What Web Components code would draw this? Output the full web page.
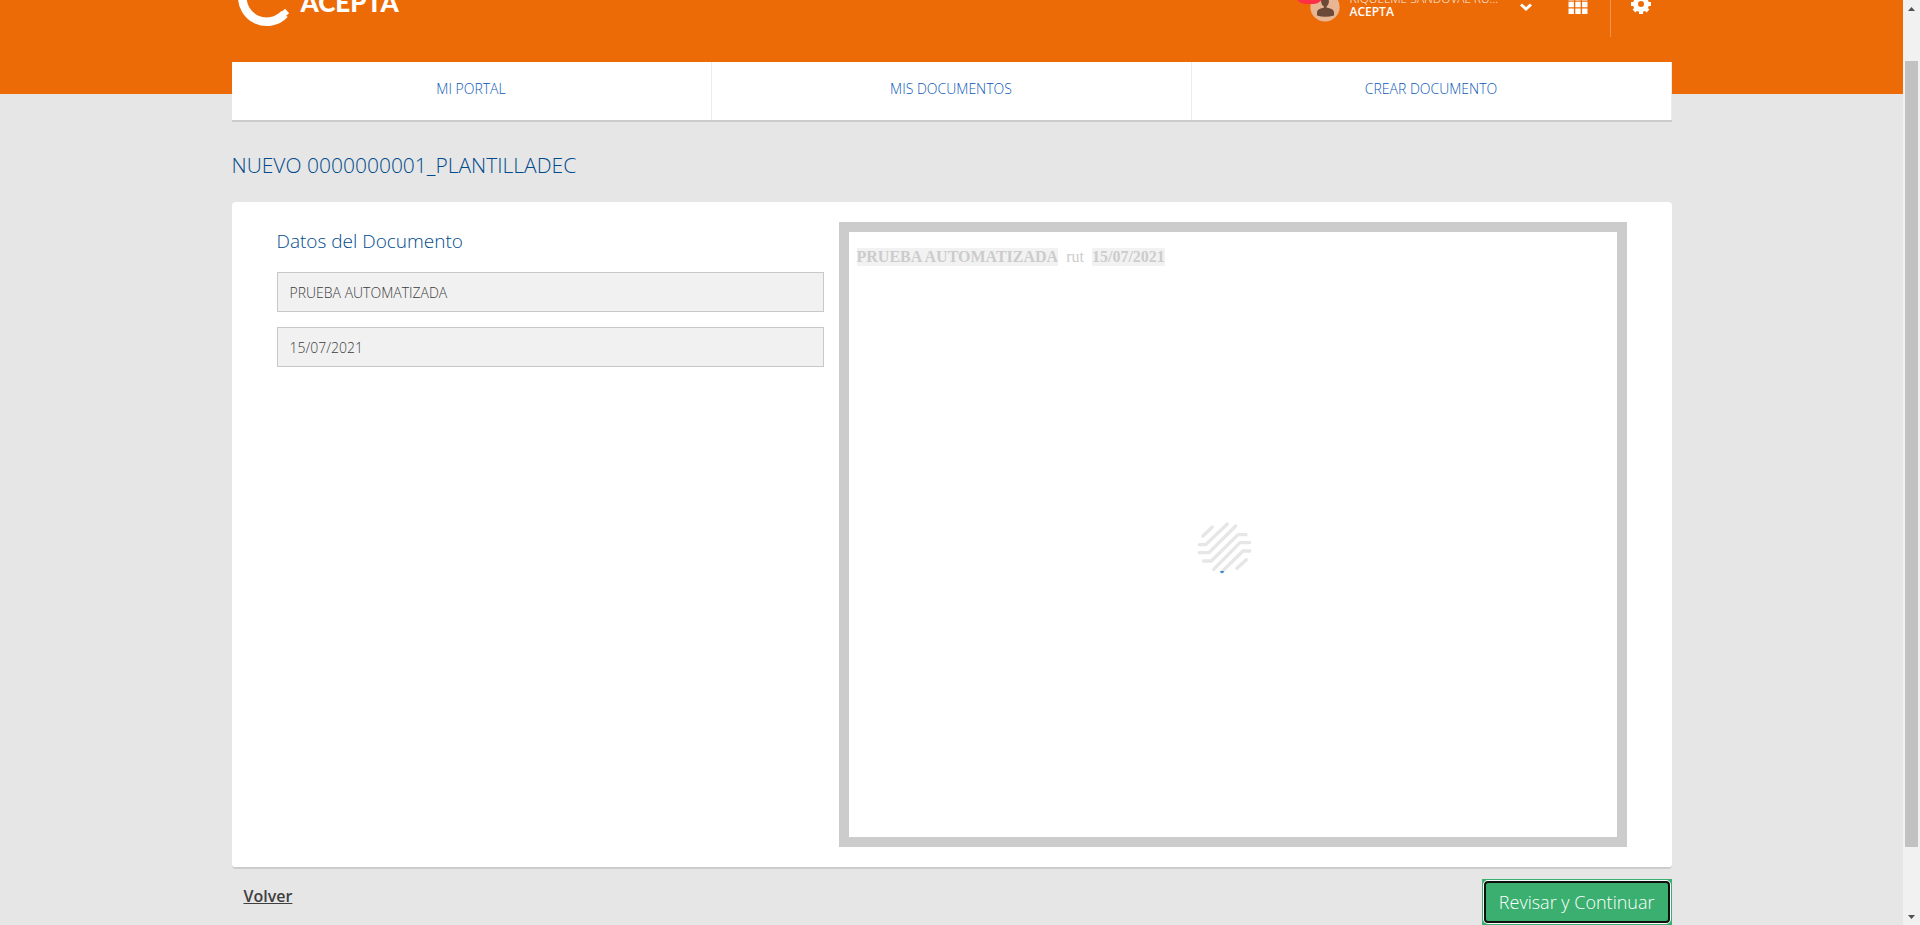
<!DOCTYPE html>
<html lang="es">
<head>
<meta charset="utf-8">
<title>Acepta - Nuevo documento</title>
<style>
  html, body { margin: 0; }
  body {
    min-height: 100vh;
    background: #e6e6e6;
    font-family: "Open Sans", sans-serif;
    font-weight: 300;
    overflow: hidden;
  }
</style>
</head>
<body>
<acepta-app></acepta-app>

<script>
function define(name, html, setup) {
  const template = document.createElement('template');
  template.innerHTML = html;
  customElements.define(name, class extends HTMLElement {
    constructor() {
      super();
      this.attachShadow({ mode: 'open' }).appendChild(template.content.cloneNode(true));
    }
    connectedCallback() {
      if (setup) setup(this, this.shadowRoot);
    }
  });
}

define('acepta-logo', `
  <style>
    :host { display: flex; align-items: center; gap: 4px; color: #fff; }
    svg { display: block; width: 61px; height: 64px; }
    span { padding-bottom: 6px; font: 900 26px/32px Lato, sans-serif; }
  </style>
  <svg viewBox="0 0 61 64" aria-hidden="true">
    <path d="M6.500 22A24.300 24.300 0 0 0 48.500 41" fill="none" stroke="#fff" stroke-width="8.600" stroke-linejoin="round"/>
    <path d="M46.500 38L50.500 42.500" stroke="#fff" stroke-width="7" stroke-linejoin="round"/>
  </svg>
  <span>ACEPTA</span>
`);

define('user-menu', `
  <style>
    :host { display: flex; align-items: center; color: #fff; font-size: 12px; line-height: 13px; }
    .avatar { position: relative; margin-right: 10px; }
    .avatar svg { display: block; width: 30px; height: 30px; margin-top: 4px; }
    .badge {
      position: absolute; left: -14px; top: -2px;
      width: 27px; height: 18px; border-radius: 9px; background: #ff2f45;
    }
    .names { width: 150px; white-space: nowrap; }
    .name { color: #fff2e8; }
    .company { font-weight: 600; }
    button { display: block; padding: 0; border: 0; background: none; margin-left: 19px; }
    button svg { display: block; width: 14px; height: 10px; margin-top: 3px; }
  </style>
  <div class="avatar">
    <svg viewBox="0 0 30 30" aria-hidden="true">
      <circle cx="15" cy="15" r="14.6" fill="#e9b693"/>
      <path d="M11 9a4.2 4.2 0 0 1 8 0c0 2.500-1.500 5-2.500 5.500v1l4.500 1.200q3 1 3 4.300v2.500q-9 2.500-17 0V21q0-3.300 3-4.300l4-1.200v-1C12.500 14 11 11.500 11 9z" fill="#6b4a37"/>
    </svg>
    <span class="badge"></span>
  </div>
  <div class="names">
    <div class="name">RIQUELME SANDOVAL RU...</div>
    <div class="company">ACEPTA</div>
  </div>
  <button type="button" aria-label="Cambiar empresa">
    <svg viewBox="0 0 14 10" aria-hidden="true"><path d="M2 2.500L7 7L12 2.500" fill="none" stroke="#fff" stroke-width="3"/></svg>
  </button>
`);

define('icon-button', `
  <style>
    :host { display: block; }
    button { display: block; padding: 0; border: 0; background: none; }
    ::slotted(svg) { display: block; width: 20px; height: 20px; }
  </style>
  <button type="button"><slot></slot></button>
`, (host, root) => root.querySelector('button').setAttribute('aria-label', host.getAttribute('label')));

define('site-header', `
  <style>
    :host { display: block; background: #ed6b06; padding-bottom: 57px; }
    .bar {
      display: flex; align-items: center; justify-content: space-between;
      max-width: 1440px; height: 64px; margin: 0 auto;
    }
    acepta-logo { margin-left: 4px; }
    .tools { display: flex; align-items: center; }
    .apps { margin-left: 35px; }
    .settings {
      display: flex; align-items: center; height: 64px; margin-left: 22px;
      padding: 0 21px 0 20px; border-left: 1px solid #f3924a;
    }
  </style>
  <div class="bar">
    <acepta-logo></acepta-logo>
    <div class="tools">
      <user-menu></user-menu>
      <icon-button class="apps" label="Aplicaciones">
        <svg viewBox="0 0 20 20" fill="#fff" aria-hidden="true">
          <path d="M.5 0h5.400v5.400H.5zM7.300 0h5.400v5.400H7.300zM14.100 0h5.400v5.400h-5.400zM.5 6.800h5.400v5.400H.5zM7.300 6.800h5.400v5.400H7.300zM14.100 6.800h5.400v5.400h-5.400zM.5 13.600h5.400V19H.5zM7.300 13.600h5.400V19H7.300zM14.100 13.600h5.400V19h-5.400z"/>
        </svg>
      </icon-button>
      <div class="settings">
        <icon-button label="Configuración">
          <svg viewBox="0 0 20 20" aria-hidden="true">
            <circle cx="10" cy="9" r="5.500" fill="none" stroke="#fff" stroke-width="5"/>
            <path d="M10-1v4M10 15v4M0 9h4M16 9h4M3 2l2.800 2.800M14.200 13.200L17 16M17 2l-2.800 2.800M5.800 13.200L3 16" stroke="#fff" stroke-width="4"/>
          </svg>
        </icon-button>
      </div>
    </div>
  </div>
`);

define('nav-item', `
  <style>
    :host { flex: 1; display: block; border-right: 1px solid #ededed; }
    a {
      display: block; padding: 17px 0 21px; text-align: center;
      font-size: 14px; line-height: 20px; color: #0a58b8; text-decoration: none;
    }
  </style>
  <a href="#"><slot></slot></a>
`);

define('main-nav', `
  <style>
    :host { display: block; position: relative; margin-top: -32px; }
    nav { display: flex; background: #fff; border-bottom: 2px solid #ccc; }
  </style>
  <nav>
    <nav-item>MI PORTAL</nav-item>
    <nav-item>MIS DOCUMENTOS</nav-item>
    <nav-item>CREAR DOCUMENTO</nav-item>
  </nav>
`);

define('text-field', `
  <style>
    :host { display: block; }
    input {
      display: block; box-sizing: border-box; width: 100%; height: 40px; margin: 0;
      padding: 0 12px; border: 1px solid #c6c8ca; border-radius: 0;
      background: #f1f1f1; color: #3c3c3c; font: inherit; font-size: 14px;
    }
  </style>
  <input type="text">
`, (host, root) => {
  const input = root.querySelector('input');
  input.value = host.getAttribute('value');
  input.setAttribute('aria-label', host.getAttribute('label'));
});

define('loading-mark', `
  <style>
    :host { display: block; }
    svg { display: block; width: 80px; height: 80px; }
  </style>
  <svg viewBox="39 -16 240 240" role="img" aria-label="Cargando">
    <path d="M69 107L97 80M58 133H77L142 71M58 157H87L167 77M71 182H94L174 103H198M101 207L180 127H209M126 214L189 152H209M171 204L199 178"
      fill="none" stroke="#e6e6e6" stroke-width="10" stroke-linecap="round" stroke-linejoin="round"/>
    <path d="M120 212H133L130 217L126 219L122 217Z" fill="#3f8bce"/>
  </svg>
`);

define('document-preview', `
  <style>
    :host {
      display: block; position: relative; box-sizing: border-box; min-height: 625px;
      padding: 16px 8px; border: 10px solid #ccc; background: #fff;
    }
    p { margin: 0; font: 16px/18px "Liberation Serif", serif; color: #ccc; white-space: pre; }
    b { display: inline-block; background: #f2f2f2; }
    .overlay {
      position: absolute; inset: 0;
      display: flex; align-items: center; justify-content: center;
    }
  </style>
  <p><b>PRUEBA AUTOMATIZADA</b>  rut  <b>15/07/2021</b></p>
  <div class="overlay"><loading-mark></loading-mark></div>
`);

define('document-card', `
  <style>
    :host {
      display: grid; grid-template-columns: 547fr 788fr; gap: 15px;
      padding: 20px 45px; background: #fff; border-radius: 4px;
      border-bottom: 2px solid #ccc;
    }
    .fields { display: grid; gap: 15px; align-content: start; padding-top: 7px; }
    h2 { margin: 0 0 4px; font-size: 19px; line-height: 24px; font-weight: 300; color: #004b8d; }
  </style>
  <section class="fields">
    <h2>Datos del Documento</h2>
    <text-field label="Nombre" value="PRUEBA AUTOMATIZADA"></text-field>
    <text-field label="Fecha" value="15/07/2021"></text-field>
  </section>
  <document-preview></document-preview>
`);

define('page-actions', `
  <style>
    :host { display: flex; align-items: flex-start; justify-content: space-between; padding-top: 10px; }
    a { margin: 5px 0 0 12px; font-size: 16px; line-height: 24px; font-weight: 600; color: #3f3f3f; }
    .focus { padding: 2px; background: #3aaf70; }
    button {
      display: block; height: 42px; padding: 0 13px; border: 2px solid #101010; border-radius: 4px;
      box-shadow: 0 0 0 1px #fff; background: #3aaf70; color: #fff;
      font: inherit; font-size: 18px; line-height: 24px;
    }
  </style>
  <a href="#">Volver</a>
  <div class="focus"><button type="button">Revisar y Continuar</button></div>
`);

define('scroll-rail', `
  <style>
    :host {
      display: flex; flex-direction: column; align-items: center; box-sizing: border-box;
      height: 100vh; padding: 7px 2px 6px; background: #f1f1f1;
    }
    svg { display: block; width: 7px; height: 4px; }
    .track { flex: 1; align-self: stretch; display: grid; grid-template-rows: 50fr 786fr 68fr; }
    .thumb { grid-row: 2; background: #c1c1c1; }
  </style>
  <svg viewBox="0 0 7 4"><path d="M0 4L3.500 0L7 4z" fill="#505050"/></svg>
  <div class="track"><div class="thumb"></div></div>
  <svg viewBox="0 0 7 4"><path d="M0 0L3.500 4L7 0z" fill="#505050"/></svg>
`);

define('acepta-app', `
  <style>
    :host { display: grid; grid-template-columns: 1fr 17px; --scrolled: 27px; }
    .view { margin-top: calc(-1 * var(--scrolled)); }
    main { max-width: 1440px; margin: 0 auto; }
    h1 { margin: 0; padding: 29px 0 23px; font-size: 21px; line-height: 28px; font-weight: 300; color: #004b8d; }
  </style>
  <div class="view">
    <site-header></site-header>
    <main>
      <main-nav></main-nav>
      <h1>NUEVO 0000000001_PLANTILLADEC</h1>
      <document-card></document-card>
      <page-actions></page-actions>
    </main>
  </div>
  <scroll-rail></scroll-rail>
`);
</script>
</body>
</html>
